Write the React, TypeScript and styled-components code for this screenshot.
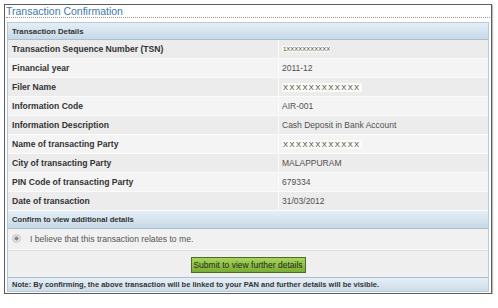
import styled, { createGlobalStyle } from "styled-components";

const GlobalStyle = createGlobalStyle`
  body {
    margin: 0;
    background: #ffffff;
    font-family: "Liberation Sans", Arial, sans-serif;
  }
`;

const Frame = styled.div`
  box-sizing: border-box;
  margin: 4px 0 0 4px;
  width: 488px;
  border: 1px solid #5c5c5c;
  box-shadow: 1px 1px 1px rgba(0, 0, 0, 0.25);
  padding: 0 2px 1px 2px;
`;

const Title = styled.div`
  height: 12px;
  line-height: 12px;
  font-size: 10.5px;
  color: #4079b4;
  margin-left: -1px;
  margin-right: -1px;
  border-bottom: 1px dotted #9a9a9a;
  margin-bottom: 4px;
  white-space: nowrap;
`;

const Panel = styled.div`
  border: 1px solid #b6c9d9;
  background: #f0f0f0;
`;

const SectionHead = styled.div<{ $h: number; $size: number }>`
  height: ${(p) => p.$h}px;
  display: flex;
  align-items: center;
  padding-left: 4px;
  box-sizing: border-box;
  background: linear-gradient(#e6eef6, #c6d9e7);
  border-bottom: 1px solid #a9c0d2;
  font-size: ${(p) => p.$size}px;
  font-weight: bold;
  color: #333;
  white-space: nowrap;
`;

const Row = styled.div<{ $odd: boolean }>`
  display: grid;
  grid-template-columns: 271px 1fr;
  height: 19px;
  box-sizing: border-box;
  border-bottom: 1px solid #fbfbfb;
  background: ${(p) => (p.$odd ? "#f4f4f4" : "#ececec")};
`;

const Label = styled.div`
  display: flex;
  align-items: center;
  padding-left: 4px;
  font-size: 8.6px;
  font-weight: bold;
  color: #333;
  border-right: 1px solid #fbfbfb;
  white-space: nowrap;
`;

const Value = styled.div<{ $masked?: "small" | "wide" }>`
  display: flex;
  align-items: center;
  padding-left: 3px;
  font-size: ${(p) => (p.$masked === "small" ? "6px" : p.$masked === "wide" ? "7.6px" : "8.5px")};
  letter-spacing: ${(p) => (p.$masked === "wide" ? "1.4px" : "0")};
  color: ${(p) => (p.$masked ? "#444" : "#505050")};
  white-space: nowrap;
`;

const Mask = styled.span`
  background: #fbfbf6;
  padding: 0 1px;
`;

const RadioRow = styled.div`
  height: 21px;
  display: flex;
  align-items: center;
  gap: 9px;
  padding-left: 4px;
  box-sizing: border-box;
  border-bottom: 1px solid #fafafa;
  background: #f1f1f1;
  font-size: 8.6px;
  color: #555;
  white-space: nowrap;
`;

const Radio = styled.span`
  width: 7px;
  height: 7px;
  border-radius: 50%;
  border: 1px solid #c4c4c4;
  background: radial-gradient(circle, #8a8a8a 0 1.8px, #e6e6e6 2.3px);
  margin-bottom: 1px;
`;

const ButtonRow = styled.div`
  height: 28px;
  display: flex;
  justify-content: center;
  align-items: center;
  box-sizing: border-box;
  border-top: 1px solid #dedede;
  border-bottom: 1px solid #a9c0d2;
  background: #efefef;
`;

const SubmitButton = styled.button`
  height: 16px;
  width: 115px;
  padding: 0;
  margin-top: 1px;
  border: 1px solid #4c6a22;
  background: linear-gradient(#a7d35e, #7aac35);
  font-family: "Liberation Sans", Arial, sans-serif;
  font-size: 8.5px;
  color: #1e2a0e;
  white-space: nowrap;
`;

const Note = styled.div`
  height: 13px;
  display: flex;
  align-items: center;
  padding-left: 4px;
  background: linear-gradient(#e6eef6, #cddde9);
  font-size: 7.5px;
  font-weight: bold;
  color: #333;
  white-space: nowrap;
`;

type Detail = { label: string; value: string; masked?: "small" | "wide" };

const details: Detail[] = [
  { label: "Transaction Sequence Number (TSN)", value: "1XXXXXXXXXXX", masked: "small" },
  { label: "Financial year", value: "2011-12" },
  { label: "Filer Name", value: "XXXXXXXXXXXX", masked: "wide" },
  { label: "Information Code", value: "AIR-001" },
  { label: "Information Description", value: "Cash Deposit in Bank Account" },
  { label: "Name of transacting Party", value: "XXXXXXXXXXXX", masked: "wide" },
  { label: "City of transacting Party", value: "MALAPPURAM" },
  { label: "PIN Code of transacting Party", value: "679334" },
  { label: "Date of transaction", value: "31/03/2012" },
];

export default function App() {
  return (
    <>
      <GlobalStyle />
      <Frame>
        <Title>Transaction Confirmation</Title>
        <Panel>
          <SectionHead $h={17} $size={7.8}>Transaction Details</SectionHead>
          {details.map((d, i) => (
            <Row key={d.label} $odd={i % 2 === 1}>
              <Label>{d.label}</Label>
              <Value $masked={d.masked}>
                {d.masked ? <Mask>{d.value}</Mask> : d.value}
              </Value>
            </Row>
          ))}
          <SectionHead $h={18} $size={7.65}>Confirm to view additional details</SectionHead>
          <RadioRow>
            <Radio />
            I believe that this transaction relates to me.
          </RadioRow>
          <ButtonRow>
            <SubmitButton type="button">Submit to view further details</SubmitButton>
          </ButtonRow>
          <Note>
            Note: By confirming, the above transaction will be linked to your PAN and further details will be visible.
          </Note>
        </Panel>
      </Frame>
    </>
  );
}
